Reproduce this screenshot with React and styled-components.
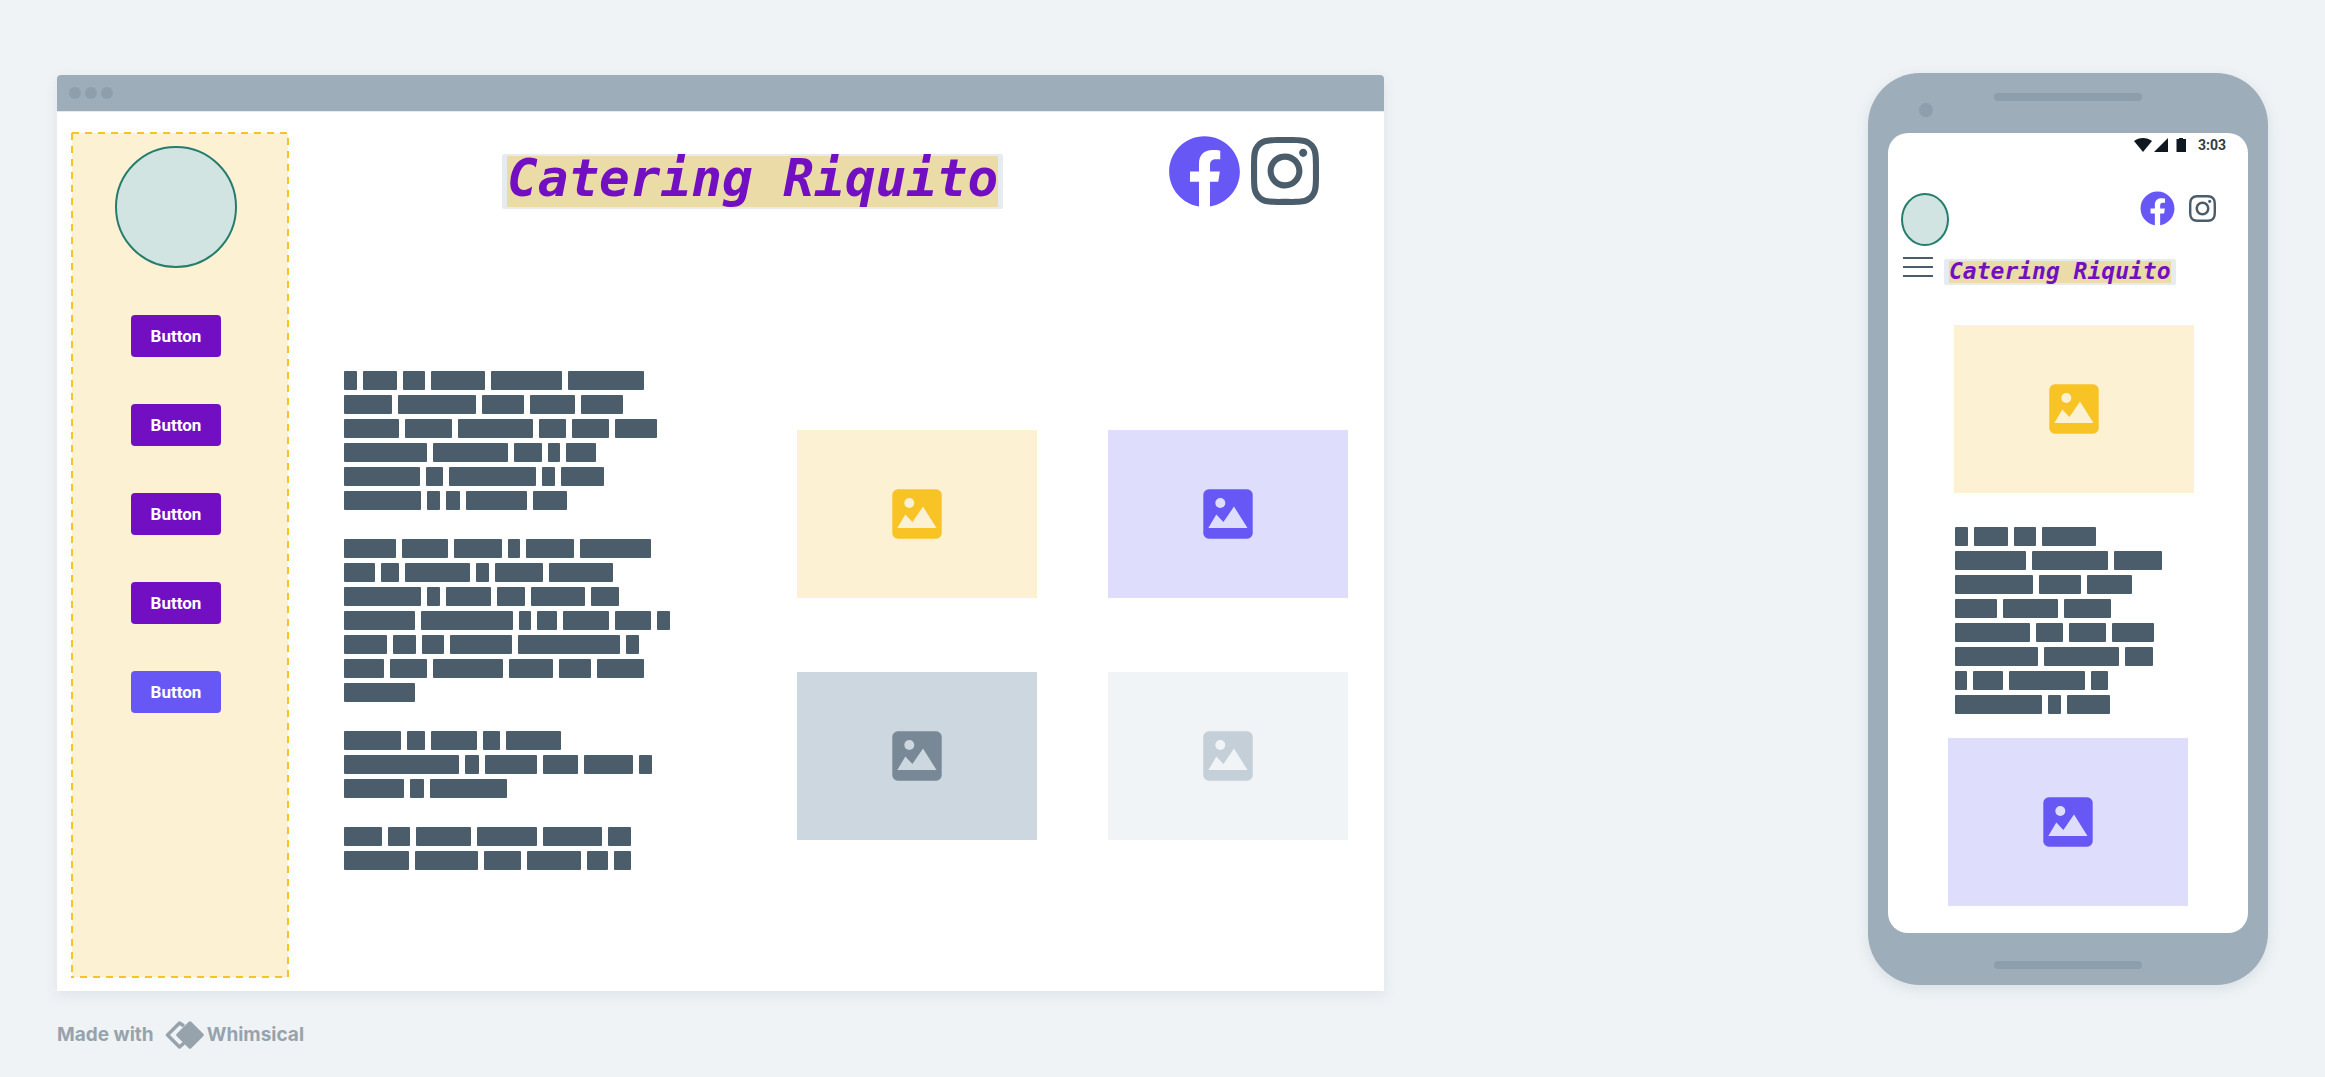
import React from "react";
import styled, { createGlobalStyle } from "styled-components";
import { FaFacebook, FaInstagram } from "react-icons/fa";

const color = {
  canvas: "#eff3f6",
  frame: "#9dadb9",
  frameDetail: "#8d9ead",
  slate: "#4b5c6a",
  purple: "#730fc3",
  indigo: "#6758f5",
  yellow: "#f7c325",
  cream: "#fdf1d3",
};

const GlobalStyle = createGlobalStyle`
  *, *::before, *::after { box-sizing: border-box; }
  body {
    margin: 0;
    background: ${color.canvas};
    font-family: Roboto, "Liberation Sans", sans-serif;
  }
`;

const Page = styled.div`
  min-height: 100vh;
  padding: 73px 57px 28px;
`;

const Board = styled.main`
  display: flex;
  justify-content: space-between;
  align-items: flex-start;
  gap: 40px;
`;

const BrowserWindow = styled.section`
  flex: 0 1 1327px;
  margin-top: 2px;
  background: #fff;
  border-radius: 4px 4px 0 0;
  box-shadow: 0 4px 14px rgba(60, 80, 100, 0.09);
`;

const TitleBar = styled.div`
  display: flex;
  align-items: center;
  gap: 4px;
  height: 36px;
  padding: 0 12px;
  background: ${color.frame};
  border-radius: 4px 4px 0 0;
  box-shadow: 0 1px 0 #e3e9ee;
`;

const Dot = styled.span`
  width: ${(p) => p.$size}px;
  height: ${(p) => p.$size}px;
  border-radius: 50%;
  background: ${color.frameDetail};
`;

const WindowBody = styled.div`
  display: flex;
  padding: 21px 14px 13px;
`;

const dash = (direction) =>
  `repeating-linear-gradient(${direction}, ${color.yellow} 0 7px, transparent 7px 13px)`;

const Sidebar = styled.aside`
  flex: none;
  display: flex;
  flex-direction: column;
  align-items: center;
  gap: 47px;
  width: 218px;
  min-height: 846px;
  padding: 14px 8px 14px 0;
  background:
    ${dash("to right")} 1px 0 / 100% 2px no-repeat,
    ${dash("to bottom")} 100% 6px / 2px 100% no-repeat,
    ${dash("to left")} -7px 100% / 100% 2px no-repeat,
    ${dash("to top")} 0 -6px / 2px 100% no-repeat,
    linear-gradient(${color.cream}, ${color.cream}) 1px 1px / calc(100% - 2px) calc(100% - 2px) no-repeat;
`;

const Avatar = styled.div`
  flex: none;
  width: ${(p) => p.$width}px;
  height: ${(p) => p.$height}px;
  border: 2px solid #257d6e;
  border-radius: 50%;
  background: #d2e4e1;
`;

const ButtonList = styled.nav`
  display: flex;
  flex-direction: column;
  gap: 47px;
`;

const NavButton = styled.button`
  width: 90px;
  height: 42px;
  padding: 0;
  border: 0;
  border-radius: 4px;
  background: ${(p) => (p.$accent ? color.indigo : color.purple)};
  color: #fff;
  font: 700 17px/24px Roboto, sans-serif;
  cursor: pointer;
`;

const WindowMain = styled.div`
  flex: 1;
  min-width: 0;
`;

const WindowHeader = styled.header`
  display: flex;
  justify-content: space-between;
  align-items: flex-start;
  padding: 0 51px 0 213px;
`;

const Brand = styled.h1`
  margin: ${(p) => (p.$compact ? 2 : 22)}px 0 0;
  padding: 2px 5px;
  border-radius: 2px;
  background: #e6ebef;
  font-family: "DejaVu Sans Mono", monospace;
  font-size: ${(p) => (p.$compact ? 23 : 51)}px;
  line-height: ${(p) => (p.$compact ? 20 : 45)}px;
  font-weight: 700;
  font-style: italic;
  white-space: nowrap;

  mark {
    display: block;
    padding-bottom: ${(p) => (p.$compact ? 2 : 6)}px;
    background: #ebdca7;
    color: ${color.purple};
  }
`;

const Social = styled.div`
  display: flex;
  align-items: center;
  gap: ${(p) => (p.$compact ? 14 : 10)}px;

  a {
    display: flex;
  }

  .facebook {
    width: ${(p) => (p.$compact ? 35 : 73)}px;
    height: ${(p) => (p.$compact ? 35 : 73)}px;
    color: ${color.indigo};
  }

  .instagram {
    width: ${(p) => (p.$compact ? 27 : 68)}px;
    height: ${(p) => (p.$compact ? 31 : 78)}px;
    color: ${color.slate};
  }
`;

const Content = styled.div`
  display: flex;
  justify-content: space-between;
  align-items: flex-start;
  margin-top: 161px;
  padding: 0 22px 0 55px;
`;

const Article = styled.div`
  display: flex;
  flex-direction: column;
  gap: 29px;
`;

const Paragraph = styled.div`
  display: flex;
  flex-direction: column;
  gap: 5px;
`;

const Line = styled.div`
  display: flex;
  gap: 6px;
`;

const Word = styled.span`
  width: ${(p) => p.$width}px;
  height: 19px;
  border-radius: 1px;
  background: ${color.slate};
`;

const Gallery = styled.div`
  display: grid;
  grid-template-columns: repeat(2, 240px);
  gap: 74px 71px;
  margin-top: 59px;
`;

const Picture = styled.div`
  display: flex;
  align-items: center;
  justify-content: center;
  width: 240px;
  height: 168px;
  background: ${(p) => p.$tone.fill};
  color: ${(p) => p.$tone.icon};
`;

const Phone = styled.section`
  flex: none;
  width: 400px;
  padding: 0 20px;
  border-radius: 52px;
  background: ${color.frame};
  box-shadow: 0 4px 14px rgba(60, 80, 100, 0.12);
`;

const PhoneTop = styled.div`
  display: flex;
  gap: 61px;
  height: 60px;
  padding: 20px 0 0 31px;

  ${Dot} {
    margin-top: 10px;
  }
`;

const Slot = styled.span`
  width: 148px;
  height: 8px;
  border-radius: 4px;
  background: ${color.frameDetail};
`;

const PhoneBottom = styled.div`
  display: flex;
  justify-content: center;
  height: 52px;
  padding-top: 28px;
`;

const Screen = styled.div`
  min-height: 800px;
  padding-bottom: 27px;
  border-radius: 20px;
  background: #fff;
`;

const StatusBar = styled.div`
  display: flex;
  justify-content: flex-end;
  align-items: center;
  height: 24px;
  padding: 0 22px;
  color: #343c43;
  font: 700 14px/16px Roboto, sans-serif;

  svg {
    margin-right: 11px;
  }
`;

const PhoneHeader = styled.header`
  display: flex;
  justify-content: space-between;
  align-items: flex-start;
  margin-top: 34px;
  padding: 0 32px 0 13px;

  ${Avatar} {
    margin-top: 2px;
  }
`;

const PhoneTitle = styled.div`
  display: flex;
  align-items: flex-start;
  gap: 11px;
  margin-top: 11px;
  padding-left: 15px;
`;

const MenuButton = styled.button`
  display: flex;
  flex-direction: column;
  gap: 7px;
  width: 30px;
  padding: 0;
  border: 0;
  background: none;
  cursor: pointer;

  span {
    width: 100%;
    height: 2px;
    background: ${color.slate};
  }
`;

const PhoneContent = styled.div`
  display: flex;
  flex-direction: column;
  align-items: flex-start;
  margin-top: 40px;
  padding-left: 60px;

  ${Picture}:first-child {
    margin-left: 6px;
  }

  ${Article} {
    margin: 34px 0 24px 7px;
  }
`;

const Credit = styled.footer`
  display: flex;
  align-items: center;
  gap: 11px;
  margin-top: 30px;
  color: #97a3ac;
  font: 700 19px/28px Inter, "Liberation Sans", sans-serif;
`;

const CreditLogo = styled.a`
  display: flex;
  align-items: center;
  gap: 3px;
  color: inherit;
  text-decoration: none;
`;

const tones = {
  yellow: { fill: color.cream, icon: color.yellow },
  indigo: { fill: "#dfddfc", icon: color.indigo },
  steel: { fill: "#cdd7e0", icon: "#788896" },
  mist: { fill: "#f0f4f7", icon: "#c4cfd8" },
};

const desktopCopy = [
  [
    [13, 34, 22, 54, 71, 76],
    [48, 78, 42, 45, 42],
    [55, 47, 75, 27, 37, 42],
    [83, 75, 28, 12, 30],
    [76, 17, 87, 13, 43],
    [77, 13, 14, 61, 34],
  ],
  [
    [52, 46, 48, 12, 48, 71],
    [31, 18, 65, 13, 48, 64],
    [77, 13, 45, 28, 54, 28],
    [71, 92, 12, 20, 46, 36, 13],
    [43, 23, 22, 62, 102, 13],
    [40, 37, 70, 44, 32, 47],
    [71],
  ],
  [
    [57, 18, 46, 17, 55],
    [115, 14, 52, 35, 49, 13],
    [60, 14, 77],
  ],
  [
    [38, 22, 55, 60, 59, 23],
    [65, 63, 37, 54, 21, 17],
  ],
];

const phoneCopy = [
  [
    [13, 34, 22, 54],
    [71, 76, 48],
    [78, 42, 45],
    [42, 55, 47],
    [75, 27, 37, 42],
    [83, 75, 28],
    [12, 30, 76, 17],
    [87, 13, 43],
  ],
];

function Copy({ paragraphs }) {
  return (
    <Article>
      {paragraphs.map((lines, i) => (
        <Paragraph key={i}>
          {lines.map((words, j) => (
            <Line key={j}>
              {words.map((width, k) => (
                <Word key={k} $width={width} />
              ))}
            </Line>
          ))}
        </Paragraph>
      ))}
    </Article>
  );
}

function Placeholder({ tone }) {
  return (
    <Picture $tone={tones[tone]}>
      <svg width="50" height="50" viewBox="0 0 50 50" aria-hidden="true">
        <rect x="0.3" y="0.3" width="49.400" height="49.400" rx="5.500" fill="currentColor" />
        <g fill={tones[tone].fill}>
          <circle cx="17.3" cy="14" r="5" />
          <path d="M5.3 39 13.3 25.6 20.4 33 31 17.6 44.5 39Z" />
        </g>
      </svg>
    </Picture>
  );
}

function SocialLinks({ compact }) {
  return (
    <Social $compact={compact}>
      <a href="#facebook" aria-label="Facebook">
        <FaFacebook className="facebook" />
      </a>
      <a href="#instagram" aria-label="Instagram">
        <FaInstagram className="instagram" />
      </a>
    </Social>
  );
}

export default function App() {
  return (
    <Page>
      <GlobalStyle />
      <Board>
        <BrowserWindow>
          <TitleBar>
            <Dot $size={12} />
            <Dot $size={12} />
            <Dot $size={12} />
          </TitleBar>
          <WindowBody>
            <Sidebar>
              <Avatar $width={122} $height={122} />
              <ButtonList>
                {[false, false, false, false, true].map((accent, i) => (
                  <NavButton key={i} type="button" $accent={accent}>
                    Button
                  </NavButton>
                ))}
              </ButtonList>
            </Sidebar>
            <WindowMain>
              <WindowHeader>
                <Brand>
                  <mark>Catering Riquito</mark>
                </Brand>
                <SocialLinks />
              </WindowHeader>
              <Content>
                <Copy paragraphs={desktopCopy} />
                <Gallery>
                  <Placeholder tone="yellow" />
                  <Placeholder tone="indigo" />
                  <Placeholder tone="steel" />
                  <Placeholder tone="mist" />
                </Gallery>
              </Content>
            </WindowMain>
          </WindowBody>
        </BrowserWindow>

        <Phone>
          <PhoneTop>
            <Dot $size={14} />
            <Slot />
          </PhoneTop>
          <Screen>
            <StatusBar>
              <svg width="53" height="14" viewBox="0 0 53 14" fill="#0f1820" aria-hidden="true">
                <path d="M0 3C5-1 13-1 18 3L9 14Z" />
                <path d="M34 0V14H20Z" />
                <path d="M42.5 1H45V0h4v1h3V14h-9.500Z" />
              </svg>
              3:03
            </StatusBar>
            <PhoneHeader>
              <Avatar $width={48} $height={53} />
              <SocialLinks compact />
            </PhoneHeader>
            <PhoneTitle>
              <MenuButton type="button" aria-label="Menu">
                <span />
                <span />
                <span />
              </MenuButton>
              <Brand as="h2" $compact>
                <mark>Catering Riquito</mark>
              </Brand>
            </PhoneTitle>
            <PhoneContent>
              <Placeholder tone="yellow" />
              <Copy paragraphs={phoneCopy} />
              <Placeholder tone="indigo" />
            </PhoneContent>
          </Screen>
          <PhoneBottom>
            <Slot />
          </PhoneBottom>
        </Phone>
      </Board>

      <Credit>
        Made with
        <CreditLogo href="#whimsical">
          <svg width="39" height="28" viewBox="0 0 39 28" aria-hidden="true">
            <path
              d="M19 5 14.500 2 2.500 14 14.500 26 19 22"
              fill="none"
              stroke="currentColor"
              strokeWidth="3.500"
              strokeLinejoin="round"
            />
            <path
              d="M25 2 37 14 25 26 13 14Z"
              fill="currentColor"
              stroke="currentColor"
              strokeWidth="3.500"
              strokeLinejoin="round"
            />
          </svg>
          Whimsical
        </CreditLogo>
      </Credit>
    </Page>
  );
}
